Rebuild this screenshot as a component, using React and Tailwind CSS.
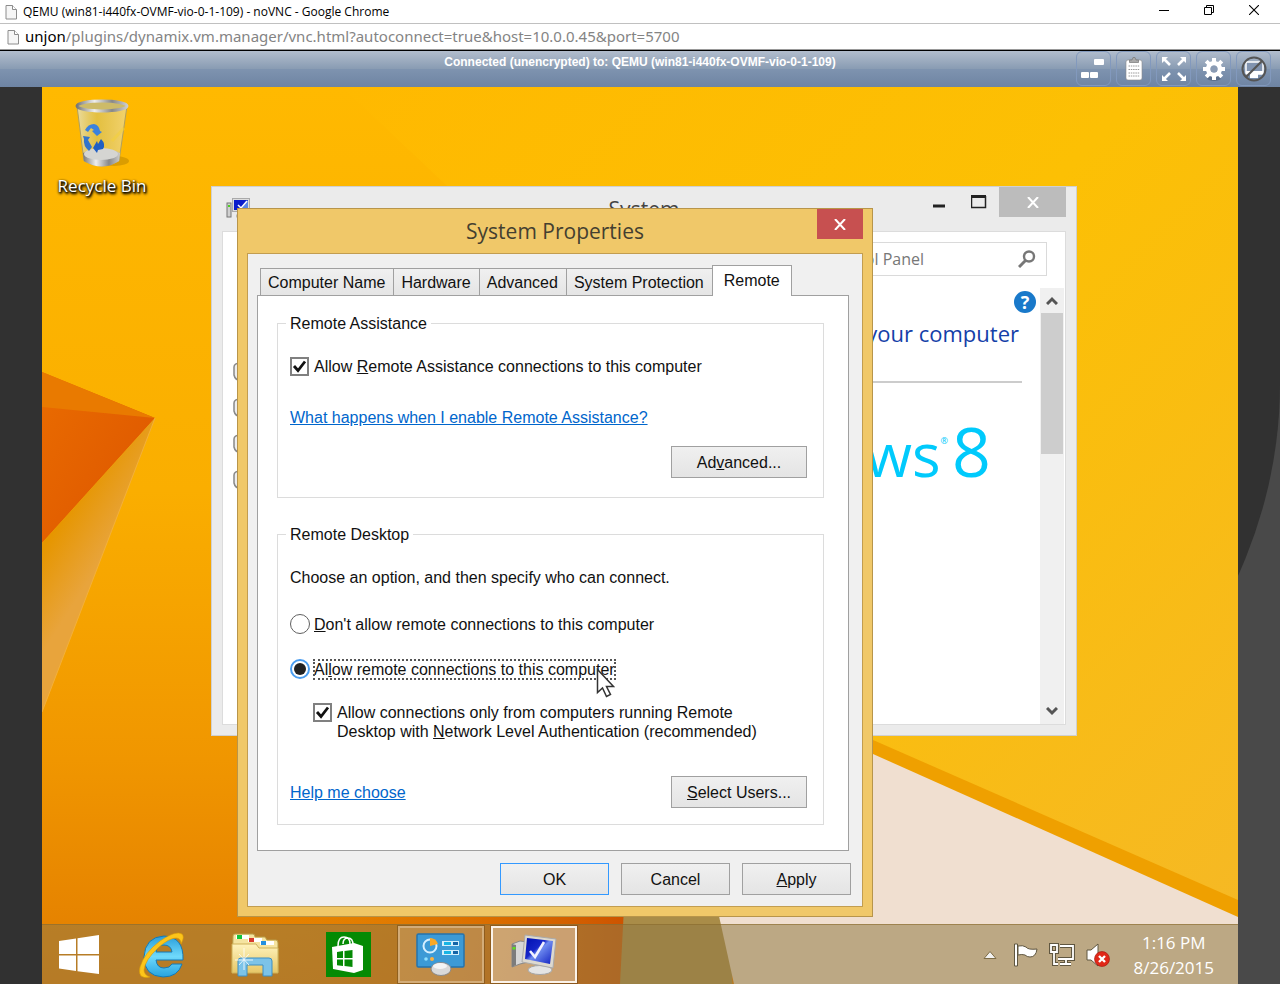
import { useState } from 'react';

const PageIcon = () => (
  <svg className="h-4 w-3 shrink-0" viewBox="0 0 12 16">
    <path d="M1 1.5h6.5l4 4v9.5H1z" fill="#f6f6f6" stroke="#8c8c8c" />
    <path d="M7.5 1.5v4h4" fill="#fff" stroke="#8c8c8c" />
  </svg>
);

const BrowserChrome = () => (
  <header className="bg-white">
    <div className="flex h-6 items-center border-b border-[#c0c0c0] pr-1 pl-[5px]">
      <PageIcon />
      <h1 className="ml-1.5 flex-1 truncate font-['Open_Sans','Noto_Sans',sans-serif] text-[12px] text-black">
        QEMU (win81-i440fx-OVMF-vio-0-1-109) - noVNC - Google Chrome
      </h1>
      <div className="flex">
        <button aria-label="Minimize" className="flex h-5 w-[45px] items-center justify-center">
          <svg width="10" height="10"><path d="M0 3.5h10" stroke="#000" /></svg>
        </button>
        <button aria-label="Restore" className="flex h-5 w-[45px] items-center justify-center pb-1">
          <svg width="10" height="10" fill="none" stroke="#000">
            <path d="M.5 2.5h7v7h-7zM2.5 2.5v-2h7v7h-2" />
          </svg>
        </button>
        <button aria-label="Close" className="flex h-5 w-[45px] items-center justify-center pb-1">
          <svg width="10" height="10"><path d="M0 0l10 10M10 0L0 10" stroke="#000" strokeWidth="1.1" /></svg>
        </button>
      </div>
    </div>
    <div className="flex h-[26px] items-center border-b border-[#999] pl-[7px]">
      <PageIcon />
      <p className="ml-1.5 truncate font-['Noto_Sans',sans-serif] text-[15px] text-[#848484]">
        <span className="text-black">unjon</span>
        /plugins/dynamix.vm.manager/vnc.html?autoconnect=true&amp;host=10.0.0.45&amp;port=5700
      </p>
    </div>
  </header>
);

const KeysIcon = () => (
  <svg width="26" height="26" viewBox="0 0 26 26" fill="#fff">
    <rect x="13" y="3" width="10" height="6" rx="1" />
    <rect x="0" y="16" width="8" height="6" rx="1" />
    <rect x="9" y="16" width="8" height="6" rx="1" />
  </svg>
);

const ClipboardIcon = () => (
  <svg width="26" height="26" viewBox="0 0 26 26">
    <rect x="5" y="4" width="16" height="20" rx="2" fill="#fff" stroke="#8b8b8b" strokeWidth=".6" />
    <path d="M8.500 6.500V4h2.500l1-2.500h2L15 4h2.500v2.500z" fill="#aaa" stroke="#777" strokeWidth=".7" />
    <path d="M7.500 10h11M7.500 13.500h11M7.500 17h11M7.500 20h11" stroke="#999" strokeDasharray="1.500 .8" />
  </svg>
);

const FullscreenIcon = () => (
  <svg width="26" height="26" viewBox="0 0 26 26" fill="#fff" stroke="#fff" strokeWidth="2.600">
    <path d="M3 3l6 6M23 3l-6 6M3 23l6-6M23 23l-6-6" />
    <path d="M1 7V1h6zM19 1h6v6zM1 19v6h6zM25 19v6h-6z" stroke="none" />
  </svg>
);

const GearIcon = () => (
  <svg width="26" height="26" viewBox="0 0 26 26">
    <ellipse cx="13" cy="22" rx="7" ry="3" fill="#42546f" opacity=".5" />
    <circle cx="13" cy="13" r="5.800" fill="none" stroke="#fff" strokeWidth="4.600" />
    <path
      d="M13 2v4M13 20v4M2 13h4M20 13h4M5.200 5.200l3 3M17.800 17.800l3 3M5.200 20.800l3-3M17.800 8.200l3-3"
      stroke="#fff"
      strokeWidth="4"
    />
    <circle cx="13" cy="13" r="3.500" fill="#8a9bb4" />
  </svg>
);

const DisconnectIcon = () => (
  <svg width="26" height="26" viewBox="0 0 26 26">
    <rect x="5" y="6" width="17" height="12" rx="1" fill="#8194b0" stroke="#fff" strokeWidth="1.500" />
    <path d="M5 15h17v3h-5v4H9v-4H5z" fill="#fff" />
    <circle cx="13" cy="13" r="11.500" fill="none" stroke="#555" strokeWidth="2" />
    <path d="M5 21L21 5" stroke="#555" strokeWidth="2.200" />
  </svg>
);

const vncTools = [
  { label: 'Extra keys', Icon: KeysIcon },
  { label: 'Clipboard', Icon: ClipboardIcon },
  { label: 'Fullscreen', Icon: FullscreenIcon },
  { label: 'Settings', Icon: GearIcon },
  { label: 'Disconnect', Icon: DisconnectIcon },
];

const VncBar = () => (
  <div className="relative z-10 flex h-[37px] justify-end border-t border-black bg-[linear-gradient(to_bottom,#b2bdcd_0%,#899cb3_49%,#7e93af_51%,#6e84a3_100%)] pr-[9px]">
    <p className="absolute inset-x-0 top-[3px] text-center font-['Liberation_Sans',sans-serif] text-[12px] leading-4 font-bold text-white">
      Connected (unencrypted) to: QEMU (win81-i440fx-OVMF-vio-0-1-109)
    </p>
    <div className="relative flex gap-[5px]">
      {vncTools.map(({ label, Icon }) => (
        <button
          key={label}
          aria-label={label}
          className="flex h-[35px] w-[35px] items-center justify-center rounded-md border border-[#8299bd]"
        >
          <Icon />
        </button>
      ))}
    </div>
  </div>
);

const Wallpaper = () => (
  <svg className="absolute inset-0 h-full w-full" viewBox="0 0 1196 897" preserveAspectRatio="none">
    <defs>
      <linearGradient id="sky" x1="0" y1="0" x2="0" y2="1">
        <stop offset="0" stopColor="#ffb900" />
        <stop offset=".45" stopColor="#faae00" />
        <stop offset=".75" stopColor="#f09600" />
        <stop offset="1" stopColor="#e27c00" />
      </linearGradient>
      <linearGradient id="sun" x1="0" y1="0" x2="1" y2="1">
        <stop offset="0" stopColor="#ffb900" />
        <stop offset=".45" stopColor="#fcc004" />
        <stop offset="1" stopColor="#f5b827" />
      </linearGradient>
      <linearGradient id="fan" gradientUnits="userSpaceOnUse" x1="15" y1="440" x2="62" y2="470">
        <stop offset="0" stopColor="#e69600" />
        <stop offset="1" stopColor="#e8a43c" />
      </linearGradient>
      <linearGradient id="ember" x1="0" y1="0" x2="1" y2="0">
        <stop offset="0" stopColor="#e27c00" stopOpacity="0" />
        <stop offset="1" stopColor="#cc5200" />
      </linearGradient>
      <linearGradient id="flame" x1="0" y1="0" x2="1" y2="1">
        <stop offset="0" stopColor="#ea6c00" />
        <stop offset="1" stopColor="#dc5400" />
      </linearGradient>
    </defs>
    <rect width="1196" height="897" fill="url(#sky)" />
    <path d="M300 0H1196V897H831V500z" fill="url(#sun)" />
    <path d="M0 285L113 331L0 456z" fill="url(#flame)" />
    <path d="M0 285L113 331L0 320z" fill="#e97a00" />
    <path d="M113 331L0 456V625z" fill="url(#fan)" />
    <path d="M113 331L0 625" stroke="#f3b03a" />
    <path d="M200 820H590V897H200z" fill="url(#ember)" />
    <path d="M582 820H690V897H578z" fill="#a98c48" />
    <path d="M675 820L831 660L1196 822V897H692z" fill="#f0dfd0" />
    <path d="M831 653L1196 813V830L831 667z" fill="#efa000" />
  </svg>
);

const RecycleBin = () => (
  <button className="absolute top-2 left-[9px] flex w-[102px] flex-col items-center">
    <svg width="60" height="76" viewBox="0 0 60 76">
      <defs>
        <linearGradient id="glass" x1="0" y1="0" x2="1" y2="0">
          <stop offset="0" stopColor="#e8dfb0" stopOpacity=".9" />
          <stop offset=".4" stopColor="#d8c35c" stopOpacity=".7" />
          <stop offset="1" stopColor="#efd98a" stopOpacity=".8" />
        </linearGradient>
        <linearGradient id="steel" x1="0" y1="0" x2="1" y2="0">
          <stop offset="0" stopColor="#777" />
          <stop offset=".35" stopColor="#eee" />
          <stop offset=".7" stopColor="#888" />
          <stop offset="1" stopColor="#ccc" />
        </linearGradient>
      </defs>
      <ellipse cx="42" cy="66" rx="15" ry="5" fill="#9a6d00" opacity=".35" />
      <path d="M5 11L12 66Q30 76 47 66L55 11z" fill="url(#glass)" stroke="#b0a060" />
      <path d="M11 58Q29 50 48 58L47 66Q30 77 12 66z" fill="url(#steel)" />
      <ellipse cx="29" cy="59" rx="17" ry="6" fill="#d5d5d2" />
      <ellipse cx="30" cy="11" rx="25" ry="5" fill="#cdbb69" stroke="url(#steel)" strokeWidth="3" />
      <path d="M13 35q3-6 9-6 5 1 6 7l2 1-5 4-5-5 2-1-3-2-3 4z" fill="#3b82dd" />
      <path d="M11 41l7 1-2 3 4 7-3 4q-6-5-5-12z" fill="#3274cc" />
      <path d="M21 53l4-7 1 3 3-5q5 5 2 10l-5 1-1 3z" fill="#1f5fc4" />
      <path d="M40 46l12-13" stroke="#f4d03c" strokeWidth="3" opacity=".6" />
    </svg>
    <span className="font-['Open_Sans','Noto_Sans',sans-serif] text-[17px] leading-[30px] text-white [text-shadow:1px_1px_2px_#000,0_1px_3px_#000,1px_2px_3px_#000]">
      Recycle Bin
    </span>
  </button>
);

const MonitorIcon = ({ className }) => (
  <svg className={className} viewBox="0 0 46 42">
    <defs>
      <linearGradient id="panel" x1="0" y1="0" x2="1" y2="1">
        <stop offset="0" stopColor="#0010b0" />
        <stop offset=".4" stopColor="#1626c8" />
        <stop offset=".5" stopColor="#6f8cf0" />
        <stop offset="1" stopColor="#1020c0" />
      </linearGradient>
    </defs>
    <path d="M1 10l8-3 8 1v20l-8 2-8 3z" fill="#d6d6d6" stroke="#888" />
    <path d="M1 10l4 1v20l-4 2z" fill="#7c7c7c" />
    <rect x="1.500" y="13" width="3" height="2.500" fill="#5be01e" />
    <path d="M24 28l8 0 1 7h-9z" fill="#aaa" />
    <ellipse cx="29" cy="36" rx="12" ry="4.500" fill="#e4e4e4" stroke="#a5a5a5" />
    <path d="M14 1l31 4-3 29-31-6z" fill="#ddd9cf" stroke="#aaa" />
    <path d="M16 4l26 3-3 23-25-5z" fill="url(#panel)" />
    <path d="M19 17l5 6 9-15" fill="none" stroke="#f2f2ff" strokeWidth="2.600" />
  </svg>
);

// title bar version, drawn square-on
const SmallMonitorIcon = ({ className }) => (
  <svg className={className} viewBox="0 0 24 24">
    <rect x="1" y="6" width="4" height="14" fill="#d0d0d0" stroke="#777" />
    <rect x="2" y="8" width="2" height="2" fill="#4bd01e" />
    <rect x="6.500" y="1.500" width="17" height="13" fill="#ddd" stroke="#aaa" />
    <path d="M8 3h14v10H8z" fill="#0a1ccc" />
    <path d="M22 3v10h-9z" fill="#5b86e8" />
    <path d="M12 8l3 3 6-7" fill="none" stroke="#fff" strokeWidth="1.500" />
    <path d="M10 19h10" stroke="#bbb" strokeWidth="3" />
  </svg>
);

const SystemWindow = () => (
  <section className="absolute top-[99px] left-[169px] flex h-[550px] w-[866px] flex-col border border-[#d0d0d0] bg-[#ebebeb] px-2.5 pb-2.5 font-['Open_Sans','Noto_Sans',sans-serif]">
    <div className="relative flex h-11 shrink-0 items-start justify-end">
      <SmallMonitorIcon className="absolute top-2.5 left-1 h-6 w-6" />
      <h2 className="absolute inset-x-0 top-2 text-center text-[21px] leading-7 text-[#444]">System</h2>
      <div className="relative flex">
        <button aria-label="Minimize" className="flex h-[30px] w-10 items-center justify-center">
          <svg width="14" height="14"><path d="M1 11h12" stroke="#222" strokeWidth="3" /></svg>
        </button>
        <button aria-label="Maximize" className="flex h-[30px] w-10 items-center justify-center">
          <svg width="16" height="14">
            <path d="M.5 1v11.500h14V1M0 2h15" fill="none" stroke="#222" strokeWidth="1.500" />
            <path d="M0 1.500h15" stroke="#222" strokeWidth="3" />
          </svg>
        </button>
        <button aria-label="Close" className="flex h-[30px] w-[67px] items-center justify-center bg-[#bcbcbc]">
          <svg width="12" height="11"><path d="M1 0l10 11M11 0L1 11" stroke="#fff" strokeWidth="2" /></svg>
        </button>
      </div>
    </div>
    <div className="flex min-h-0 flex-1 flex-col border border-[#dcdcdc] bg-white">
      <div className="flex justify-end pt-2.5 pr-[18px] pb-3">
        <label className="flex h-[34px] w-[280px] items-center border border-[#dadada]">
          <input
            type="text"
            aria-label="Search Control Panel"
            placeholder="Search Control Panel"
            className="w-[156px] min-w-0 text-right text-[16px] text-[#777] outline-none placeholder:text-[#777]"
          />
          <svg className="mr-2.5 ml-auto h-[18px] w-[18px]" viewBox="0 0 18 18" fill="none" stroke="#777">
            <circle cx="11" cy="6.500" r="5" strokeWidth="2.400" />
            <path d="M7.500 10.500L1 17" strokeWidth="3" />
          </svg>
        </label>
      </div>
      <div className="flex min-h-0 flex-1">
        <ul className="flex flex-col gap-4 pt-[74px] pl-2.5">
          {['Device Manager', 'Remote settings', 'System protection', 'Advanced system settings'].map((name) => (
            <li key={name} aria-label={name}>
              <svg width="16" height="20">
                <path d="M8 1Q1 1 1 5v8q1 5 7 6 6-1 7-6V5q0-4-7-4z" fill="#eee" stroke="#888" strokeWidth="1.500" />
              </svg>
            </li>
          ))}
        </ul>
        <div className="flex flex-1 flex-col items-end overflow-hidden">
          <button aria-label="Help" className="mt-[3px] mr-1 flex h-[22px] w-[22px] items-center justify-center rounded-full bg-[#1979ca] text-[18px] leading-none font-bold text-white">
            ?
          </button>
          <h3 className="mt-1 mr-[21px] text-[22px] leading-8 text-[#1440a8]">View basic information about your computer</h3>
          <hr className="mt-8 mr-[18px] w-[500px] border-t-2 border-[#ccc]" />
          <p aria-label="Windows 8" className="mt-7 mr-[49px] flex items-baseline text-[60px] leading-[80px] text-[#00cafc]">
            ows<span className="self-start pt-2.5 text-[9px] leading-10">®</span>
            <span className="ml-1 text-[68px]">8</span>
          </p>
        </div>
        <div className="mr-px flex w-6 flex-col items-center bg-[#f0f0f0]">
          <button aria-label="Scroll up" className="flex h-[25px] shrink-0 items-center justify-center">
            <svg width="12" height="9"><path d="M1 8l5-5 5 5" fill="none" stroke="#555" strokeWidth="3" /></svg>
          </button>
          <div className="h-[141px] w-[22px] shrink-0 bg-[#cdcdcd]" />
          <button aria-label="Scroll down" className="mt-auto flex h-[25px] shrink-0 items-center justify-center">
            <svg width="12" height="9"><path d="M1 1l5 5 5-5" fill="none" stroke="#555" strokeWidth="3" /></svg>
          </button>
        </div>
      </div>
    </div>
  </section>
);

const CheckBox = ({ id, checked, onChange }) => (
  <span className="relative flex h-[19px] w-[19px] shrink-0">
    <input
      id={id}
      type="checkbox"
      checked={checked}
      onChange={onChange}
      className="h-full w-full appearance-none border-2 border-[#808080] bg-white"
    />
    {checked && (
      <svg className="pointer-events-none absolute inset-0" viewBox="0 0 19 19">
        <path d="M4 9l4 4.500 7-9" fill="none" stroke="#111" strokeWidth="2.800" />
      </svg>
    )}
  </span>
);

const Radio = ({ id, checked, onChange }) => (
  <span className="relative flex h-5 w-5 shrink-0 items-center justify-center">
    <input
      id={id}
      type="radio"
      name="remote-desktop"
      checked={checked}
      onChange={onChange}
      className="h-full w-full appearance-none rounded-full border border-[#606060] bg-white checked:border-2 checked:border-[#4a9df0]"
    />
    {checked && <span className="pointer-events-none absolute h-3 w-3 rounded-full bg-[#222]" />}
  </span>
);

const PushButton = ({ className, children }) => (
  <button className={`flex h-8 items-center justify-center border bg-linear-to-b from-[#f0f0f0] to-[#e4e4e4] ${className}`}>
    <span>{children}</span>
  </button>
);

const tabs = ['Computer Name', 'Hardware', 'Advanced', 'System Protection', 'Remote'];

const PropertiesDialog = () => {
  const [tab, setTab] = useState('Remote');
  const [assistance, setAssistance] = useState(true);
  const [remote, setRemote] = useState('allow');
  const [nla, setNla] = useState(true);

  return (
    <section
      role="dialog"
      aria-label="System Properties"
      className="absolute top-[121px] left-[195px] w-[636px] border border-[#b8954a] bg-[#f0c869] px-[9px] pb-[9px] font-['Liberation_Sans',sans-serif] text-[16px] leading-[19px] text-[#111]"
    >
      <div className="relative flex h-11 items-start justify-end">
        <h2 className="absolute inset-x-0 top-2 text-center font-['Open_Sans','Noto_Sans',sans-serif] text-[21px] leading-7 text-[#443f30]">
          System Properties
        </h2>
        <button aria-label="Close" className="relative flex h-[30px] w-[46px] items-center justify-center bg-[#c75050]">
          <svg width="12" height="11"><path d="M1 0l10 11M11 0L1 11" stroke="#fff" strokeWidth="2" /></svg>
        </button>
      </div>
      <div className="border border-[#c29d50] bg-[#f0f0f0] px-[9px] py-[11px]">
        <div role="tablist" className="flex items-end pl-[3px]">
          {tabs.map((name) => (
            <button
              key={name}
              role="tab"
              aria-selected={name === tab}
              onClick={() => setTab(name)}
              className={
                name === tab
                  ? 'relative -mb-px h-[31px] border border-b-0 border-[#a0a0a0] bg-white px-[11px] pb-0.5'
                  : 'h-[27px] border border-r-0 border-b-0 border-[#a0a0a0] bg-linear-to-b from-[#f0f0f0] to-[#e5e5e5] pr-2 pl-[7px]'
              }
            >
              {name}
            </button>
          ))}
        </div>
        <div role="tabpanel" className="mr-1 border border-[#a0a0a0] bg-white px-[19px] pt-[18px] pb-[25px]">
          <div className="mr-[5px]">
            <fieldset className="border border-[#dcdcdc] pr-4 pb-[19px] pl-3">
              <legend className="-ml-1 px-1">Remote Assistance</legend>
              <div className="mt-6 flex items-center gap-[5px]">
                <CheckBox id="assistance" checked={assistance} onChange={(e) => setAssistance(e.target.checked)} />
                <label htmlFor="assistance">
                  Allow <u>R</u>emote Assistance connections to this computer
                </label>
              </div>
              <a href="#assistance" className="mt-8 block text-[#0066cc] underline">
                What happens when I enable Remote Assistance?
              </a>
              <div className="mt-[19px] flex justify-end">
                <PushButton className="w-[136px] border-[#a0a0a0]">Ad<u>v</u>anced...</PushButton>
              </div>
            </fieldset>
            <fieldset className="mt-[27px] border border-[#dcdcdc] pr-4 pb-4 pl-3">
              <legend className="-ml-1 px-1">Remote Desktop</legend>
              <p className="mt-6">Choose an option, and then specify who can connect.</p>
              <div className="mt-[27px] flex items-center gap-1">
                <Radio id="deny" checked={remote === 'deny'} onChange={() => setRemote('deny')} />
                <label htmlFor="deny">
                  <u>D</u>on't allow remote connections to this computer
                </label>
              </div>
              <div className="mt-[25px] flex items-center gap-1">
                <Radio id="allow" checked={remote === 'allow'} onChange={() => setRemote('allow')} />
                <label htmlFor="allow" className="outline-2 -outline-offset-1 outline-dotted outline-[#555]">
                  Al<u>l</u>ow remote connections to this computer
                </label>
              </div>
              <div className="mt-6 flex items-start gap-[5px] pl-[23px]">
                <CheckBox id="nla" checked={nla} onChange={(e) => setNla(e.target.checked)} />
                <label htmlFor="nla">
                  Allow connections only from computers running Remote
                  <br />
                  Desktop with <u>N</u>etwork Level Authentication (recommended)
                </label>
              </div>
              <div className="mt-[35px] flex items-center justify-between">
                <a href="#help" className="text-[#0066cc] underline">Help me choose</a>
                <PushButton className="w-[136px] border-[#a0a0a0]"><u>S</u>elect Users...</PushButton>
              </div>
            </fieldset>
          </div>
        </div>
        <div className="mt-3 mr-0.5 flex justify-end gap-3">
          <PushButton className="w-[109px] border-[#3399ff]">OK</PushButton>
          <PushButton className="w-[109px] border-[#a0a0a0]">Cancel</PushButton>
          <PushButton className="w-[109px] border-[#a0a0a0]"><u>A</u>pply</PushButton>
        </div>
      </div>
    </section>
  );
};

const Pointer = () => (
  <svg className="pointer-events-none absolute top-[581px] left-[554px]" width="19" height="30" viewBox="0 0 19 30">
    <path d="M1.500 1.500v23l5-4.500 4 8.500 4-2-4-8h7z" fill="#fff" stroke="#333" strokeWidth="1.500" />
  </svg>
);

const StartIcon = () => (
  <svg width="40" height="40" viewBox="0 0 40 40" fill="#fff">
    <path d="M0 6l17-2.500V19H0zM18.500 3.200L40 0v19H18.500zM0 20.500h17V36L0 33.500zM18.500 20.500H40V39l-21.500-2.800z" />
  </svg>
);

const IeIcon = () => (
  <svg width="46" height="46" viewBox="0 0 46 46">
    <defs>
      <linearGradient id="ie" x1="0" y1="0" x2="0" y2="1">
        <stop offset="0" stopColor="#2a9edb" />
        <stop offset=".5" stopColor="#6fd9fb" />
        <stop offset="1" stopColor="#27a3e0" />
      </linearGradient>
    </defs>
    <path
      d="M44 28H17q1 8 8 8 6 0 8-4h10q-4 13-19 13Q5 44 5 25 6 5 25 4q20 1 19 24zM17 20h16q-1-7-8-7t-8 7z"
      fill="url(#ie)"
      stroke="#1679b4"
    />
    <path
      d="M11 45Q-2 48 1 35 5 21 21 9 37-2 43 2q3 3-1 10 0-6-5-6-7 0-18 10Q6 28 5 38q0 5 6 7z"
      fill="#fdc51a"
      stroke="#d89a05"
      strokeWidth=".6"
    />
  </svg>
);

const ExplorerIcon = () => (
  <svg width="48" height="44" viewBox="0 0 48 44">
    <defs>
      <linearGradient id="folder" x1="0" y1="0" x2="0" y2="1">
        <stop offset="0" stopColor="#fff3bd" />
        <stop offset="1" stopColor="#e6c766" />
      </linearGradient>
    </defs>
    <path d="M2 3q0-2 2-2h18q2 0 2 3h10l2 3h9q2 0 2 3v29H1z" fill="#f5e4a0" stroke="#b89d49" />
    <path d="M5 2h13v4H5zM17 5h14v4H17zM29 8h14v4H29z" fill="#fff" />
    <path d="M6 2h5v4H6z" fill="#12c43a" />
    <path d="M18 5h5v4h-5z" fill="#d83a2c" />
    <path d="M30 8h5v4h-5z" fill="#2290e0" />
    <path d="M1 11h24l3 4h19v25H1z" fill="url(#folder)" stroke="#cfb25a" />
    <path d="M7 43V28q0-3 3-3h28q3 0 3 3v15h-9V32H16v11z" fill="#7cc3e8" stroke="#3c8fc4" />
    <path d="M13 15v22M4 27h18M8 21l10 11M18 21L8 32" stroke="#fff" strokeWidth=".9" opacity=".9" />
  </svg>
);

const StoreIcon = () => (
  <svg width="45" height="45" viewBox="0 0 45 45">
    <rect width="45" height="45" fill="#048a04" />
    <path d="M6 15l22-4 9 3v24l-9 3-21-4z" fill="#fff" />
    <path d="M12 14q0-9 6-9t6 7M17 12q0-6 5-6t5 7" fill="none" stroke="#fff" strokeWidth="1.500" />
    <path d="M11 20l6-1v7h-6zM18.500 19l8-1v8h-8zM11 27.500h6V34l-6-.700zM18.500 27.500h8V35l-8-.900z" fill="#048a04" />
  </svg>
);

const ControlPanelIcon = () => (
  <svg width="50" height="44" viewBox="0 0 50 44">
    <rect x="1" y="1" width="47" height="33" rx="1.500" fill="#3c9ad6" stroke="#2573ac" strokeWidth="1.500" />
    <circle cx="14" cy="13" r="6.500" fill="none" stroke="#d6efff" strokeWidth="2" />
    <path d="M14 13V5q6 0 8 6z" fill="#f9a826" />
    <path d="M26 8h17v5H26zM26 17h17v5H26z" fill="#d3effc" />
    <path d="M28 9h7v3h-7zM28 18h7v3h-7z" fill="#18b4e4" />
    <path d="M37 9h5v3h-5zM37 18h5v3h-5z" fill="#1565a8" />
    <circle cx="10" cy="26" r="1.800" fill="#8ee0ff" />
    <circle cx="16" cy="26" r="2" fill="#fcb040" />
    <ellipse cx="25" cy="36" rx="10" ry="6.500" fill="#d9d9d9" stroke="#8b8b8b" />
    <ellipse cx="24" cy="33" rx="7" ry="3" fill="#f4f4f4" />
  </svg>
);

const taskItems = [
  { label: 'Internet Explorer', icon: <IeIcon />, frame: 'border-transparent' },
  { label: 'File Explorer', icon: <ExplorerIcon />, frame: 'border-transparent' },
  { label: 'Store', icon: <StoreIcon />, frame: 'border-transparent' },
  { label: 'Control Panel', icon: <ControlPanelIcon />, frame: 'border-[#d3ac78] bg-white/15 ring-1 ring-black/20' },
  { label: 'System', icon: <MonitorIcon className="h-[42px] w-[46px]" />, frame: 'border-[#fbf3ea] bg-white/35 ring-1 ring-black/20' },
];

const Taskbar = () => (
  <nav className="relative flex h-[60px] items-stretch border-t border-[#8a6a2c]/60 bg-[rgb(145,122,70)]/55">
    <button aria-label="Start" className="flex w-[74px] items-center justify-center">
      <StartIcon />
    </button>
    <div className="ml-[3px] flex gap-[7px] py-px">
      {taskItems.map(({ label, icon, frame }) => (
        <button key={label} aria-label={label} className={`flex w-[86px] items-center justify-center border-2 ${frame}`}>
          {icon}
        </button>
      ))}
    </div>
    <div className="ml-auto flex items-center gap-2.5 pr-6 text-white">
      <button aria-label="Show hidden icons" className="mr-1.5">
        <svg width="14" height="10"><path d="M1 8.500l6-7 6 7z" fill="#f2f2f2" stroke="#7d6c46" /></svg>
      </button>
      <button aria-label="Action Center">
        <svg width="26" height="26" viewBox="0 0 26 26" fill="#fff" stroke="#5f5640">
          <path d="M1.500 2h3v22h-3z" />
          <path d="M5 4q5-1 8 1 2 3 11 2-1 8-7 8-3 0-5-2-3-1-7 0z" />
        </svg>
      </button>
      <button aria-label="Network">
        <svg width="26" height="26" viewBox="0 0 26 26" fill="none">
          <path d="M11 4h13v13H9M17 17v4M11 22h11M2 3h6v7H2zM5 10v12h4" stroke="#5f5640" strokeWidth="4" />
          <path d="M11 4h13v13H9M17 17v4M11 22h11M2 3h6v7H2zM5 10v12h4" stroke="#fff" strokeWidth="1.800" />
        </svg>
      </button>
      <button aria-label="Volume">
        <svg width="26" height="26" viewBox="0 0 26 26">
          <path d="M2 8h4l7-6v22l-7-6H2z" fill="#fff" stroke="#5f5640" />
          <circle cx="17" cy="17" r="7.500" fill="#e02818" stroke="#a01008" strokeWidth=".6" />
          <path d="M14 14l6 6M20 14l-6 6" stroke="#fff" strokeWidth="2.400" />
        </svg>
      </button>
      <div className="ml-3 text-center font-['Open_Sans','Noto_Sans',sans-serif] text-[17px] leading-[25px]">
        <p>1:16 PM</p>
        <p>8/26/2015</p>
      </div>
    </div>
  </nav>
);

export default function App() {
  return (
    <div className="flex min-h-screen flex-col bg-[#494949]">
      <BrowserChrome />
      <VncBar />
      <div className="flex flex-1 rounded-br-[800px_600px] bg-[#313131] px-[42px]">
        <main className="relative flex flex-1 flex-col justify-end overflow-hidden">
          <Wallpaper />
          <RecycleBin />
          <SystemWindow />
          <PropertiesDialog />
          <Pointer />
          <Taskbar />
        </main>
      </div>
    </div>
  );
}
